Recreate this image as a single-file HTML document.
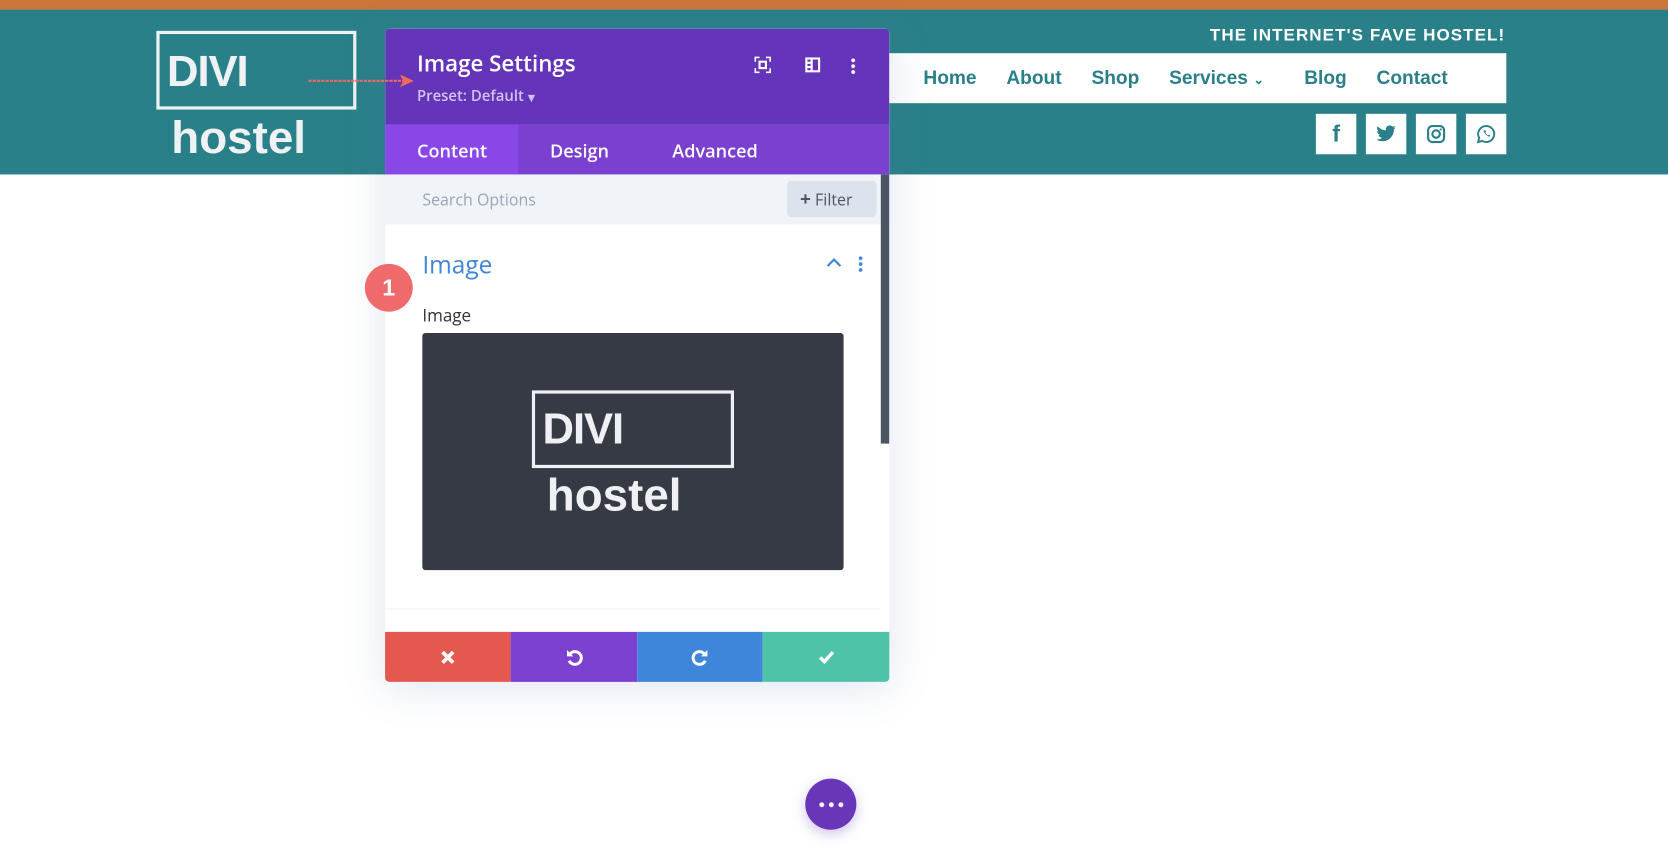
<!DOCTYPE html>
<html><head><meta charset="utf-8"><style>
*{margin:0;padding:0;box-sizing:border-box}
body{width:1668px;height:855px;overflow:hidden;background:#fff;font-family:"Liberation Sans",sans-serif;position:relative}
#w{position:absolute;left:0;top:0;width:1568px;height:804px;transform:scale(1.06378);transform-origin:0 0}
.a{position:absolute}
.os{font-family:"Open Sans","DejaVu Sans","Liberation Sans",sans-serif}
.nav span{position:absolute;top:13px;color:#2a7f88;font-weight:bold;font-size:18px}
.soc{position:absolute;top:107px;width:38px;height:38px;background:#fff;display:flex;align-items:center;justify-content:center}
.btn{position:absolute;top:594px;height:47px;display:flex;align-items:center;justify-content:center}
</style></head><body><div id="w">
<div class="a" style="left:0;top:0;width:1568px;height:9px;background:#cc763a"></div>
<div class="a" style="left:0;top:9px;width:1568px;height:155px;background:#2a8088"></div>
<!-- logo -->
<div class="a" style="left:147px;top:29px;width:188px;height:74px;border:3px solid #eef2f5"></div>
<div class="a" style="left:157px;top:44px;font-size:41px;font-weight:bold;color:#eef2f5;letter-spacing:-1px">DIVI</div>
<div class="a" style="left:161px;top:106px;font-size:43px;font-weight:bold;color:#eef2f5">hostel</div>
<!-- tagline -->
<div class="a" style="right:153px;top:25px;color:#fff;font-weight:bold;font-size:16px;letter-spacing:1px">THE INTERNET'S FAVE HOSTEL!</div>
<!-- nav -->
<div class="a nav" style="left:835px;top:50px;width:581px;height:47px;background:#fff">
<span style="left:33px">Home</span><span style="left:111px">About</span><span style="left:191px">Shop</span><span style="left:264px">Services <small style="font-size:12px">&#8964;</small></span><span style="left:391px">Blog</span><span style="left:459px">Contact</span>
</div>
<div class="soc" style="left:1237px"><span style="color:#2a7f88;font-weight:bold;font-size:22px">f</span></div>
<div class="soc" style="left:1284px"><svg width="20" height="18" viewBox="0 0 24 20"><path d="M23 2.5c-.8.4-1.7.6-2.6.7.9-.6 1.6-1.4 2-2.5-.9.5-1.9.9-2.9 1.1C18.6.9 17.4.3 16.1.3c-2.5 0-4.5 2-4.5 4.5 0 .4 0 .7.1 1C7.9 5.6 4.6 3.8 2.4 1.1c-.4.7-.6 1.5-.6 2.3 0 1.6.8 2.9 2 3.8-.7 0-1.4-.2-2-.6 0 2.2 1.6 4 3.6 4.4-.7.2-1.4.2-2 .1.6 1.8 2.200 3.1 4.2 3.1-1.5 1.2-3.5 1.9-5.6 1.900H1c2 1.3 4.4 2 6.9 2 8.3 0 12.8-6.9 12.8-12.8v-.6c.9-.6 1.7-1.4 2.3-2.3z" fill="#2a7f88"/></svg></div>
<div class="soc" style="left:1331px"><svg width="18" height="18" viewBox="0 0 18 18"><rect x="1.5" y="1.5" width="15" height="15" rx="4" fill="none" stroke="#2a7f88" stroke-width="2"/><circle cx="9" cy="9" r="3.5" fill="none" stroke="#2a7f88" stroke-width="2"/><circle cx="13.3" cy="4.7" r="1" fill="#2a7f88"/></svg></div>
<div class="soc" style="left:1378px"><svg width="18" height="18" viewBox="0 0 18 18"><path d="M9 1.5a7.5 7.5 0 0 0-6.5 11.2L1.5 16.5l3.9-1A7.5 7.5 0 1 0 9 1.5z" fill="none" stroke="#2a7f88" stroke-width="1.8"/><path d="M6.5 5.5c.5 2.5 2.5 5 5.5 6l1-1.2-1.5-.8-.7.7c-1-.5-2-1.5-2.5-2.5l.7-.7-.8-1.5z" fill="#2a7f88"/></svg></div>
<!-- panel -->
<div class="a" style="left:362px;top:27px;width:474px;height:614px;border-radius:4px;overflow:hidden;box-shadow:0 5px 40px rgba(80,110,180,.18);background:#fff">
<div class="a" style="left:0;top:0;width:474px;height:90px;background:#6535b9"></div>
<div class="a os" style="left:30px;top:19px;color:#fff;font-size:21px;font-weight:600">Image Settings</div>
<div class="a os" style="left:30px;top:54px;color:#d2c2ef;font-size:14px;font-weight:600">Preset: Default <span style="font-size:9px">▼</span></div>
<svg class="a" style="left:347px;top:26px" width="16" height="16"><path d="M1 5V1h4M11 1h4v4M15 11v4h-4M5 15H1v-4" fill="none" stroke="#fff" stroke-width="1.5"/><rect x="5" y="5" width="6" height="6" fill="none" stroke="#fff" stroke-width="2"/></svg>
<svg class="a" style="left:394px;top:26px" width="16" height="16"><rect x="1" y="1" width="14" height="14" fill="#fff"/><rect x="3" y="3" width="3" height="2" fill="#6535b9"/><rect x="3" y="7" width="3" height="2" fill="#6535b9"/><rect x="3" y="11" width="3" height="2" fill="#6535b9"/><rect x="8" y="3" width="5" height="10" fill="#6535b9"/></svg>
<div class="a" style="left:438px;top:27px;width:4px;height:16px;background:radial-gradient(circle,#fff 1.6px,transparent 2px) 0 0/4px 5.5px"></div>
<div class="a" style="left:0;top:90px;width:474px;height:47px;background:#7b40d0"></div>
<div class="a" style="left:0;top:90px;width:125px;height:47px;background:#8a47e8"></div>
<div class="a os" style="left:30px;top:103px;color:#fff;font-size:17px;font-weight:600">Content</div>
<div class="a os" style="left:155px;top:103px;color:#fff;font-size:17px;font-weight:600">Design</div>
<div class="a os" style="left:270px;top:103px;color:#fff;font-size:17px;font-weight:600">Advanced</div>
<div class="a" style="left:0;top:137px;width:474px;height:47px;background:#f0f3f8"></div>
<div class="a os" style="left:35px;top:151px;color:#9aa5b5;font-size:15px">Search Options</div>
<div class="a os" style="left:378px;top:143px;width:84px;height:34px;background:#dde3ec;border-radius:4px;color:#4d5766;font-size:15px;line-height:34px;padding-left:12px"><b style="font-size:18px">+</b> Filter</div>
<div class="a" style="left:466px;top:137px;width:8px;height:253px;background:#4b5563"></div>
<div class="a os" style="left:35px;top:205px;color:#3e86d8;font-size:23px">Image</div>
<svg class="a" style="left:414px;top:214px" width="16" height="12"><path d="M2 9l6-6 6 6" fill="none" stroke="#3e86d8" stroke-width="2"/></svg>
<div class="a" style="left:445px;top:213px;width:4px;height:16px;background:radial-gradient(circle,#3e86d8 1.5px,transparent 2px) 0 0/4px 5.5px"></div>
<div class="a os" style="left:35px;top:258px;color:#333;font-size:16px">Image</div>
<div class="a" style="left:35px;top:286px;width:396px;height:223px;background:#353a45;border-radius:3px"></div>
<div class="a" style="left:138px;top:340px;width:190px;height:73px;border:3px solid #eef0f3"></div>
<div class="a" style="left:148px;top:353px;font-size:41px;font-weight:bold;color:#eef0f3;letter-spacing:-1px">DIVI</div>
<div class="a" style="left:152px;top:415px;font-size:43px;font-weight:bold;color:#eef0f3">hostel</div>
<div class="a" style="left:0;top:545px;width:466px;height:1px;background:#eef1f6"></div>
</div>
<svg class="a" style="left:288px;top:68px" width="104" height="16"><line x1="2" y1="8" x2="92" y2="8" stroke="#ef6a5e" stroke-width="2" stroke-dasharray="3 1"/><path d="M88 2 L101 8 L88 14 L91 8Z" fill="#ef6a5e"/></svg>
<div class="btn" style="left:362px;width:118px;background:#e5584f;border-bottom-left-radius:4px"><svg width="14" height="14"><path d="M2 2l10 10M12 2L2 12" stroke="#fff" stroke-width="3.5"/></svg></div>
<div class="btn" style="left:480px;width:119px;background:#7c41d0"><svg width="18" height="18" viewBox="0 0 18 18"><path d="M5 5.5A6 6 0 1 1 4 12" fill="none" stroke="#fff" stroke-width="2.8"/><path d="M2 2v6h6z" fill="#fff"/></svg></div>
<div class="btn" style="left:599px;width:118px;background:#3d86da"><svg width="18" height="18" viewBox="0 0 18 18"><path d="M13 5.5A6 6 0 1 0 14 12" fill="none" stroke="#fff" stroke-width="2.8"/><path d="M16 2v6h-6z" fill="#fff"/></svg></div>
<div class="btn" style="left:717px;width:119px;background:#4fc3a8;border-bottom-right-radius:4px"><svg width="16" height="14"><path d="M2 7l4 4 8-9" fill="none" stroke="#fff" stroke-width="3.2"/></svg></div>
<!-- badge -->
<div class="a" style="left:343px;top:248px;width:45px;height:45px;border-radius:50%;background:#ef6a6a;color:#fff;font-weight:bold;font-size:22px;text-align:center;line-height:45px">1</div>
<!-- fab -->
<div class="a" style="left:757px;top:732px;width:48px;height:48px;border-radius:50%;background:#6a36b9;box-shadow:0 4px 12px rgba(100,60,180,.3)"></div>
<div class="a" style="left:768px;top:754px;width:27px;height:5px;background:radial-gradient(circle,#fff 2px,transparent 2.5px) 0 0/9px 5px"></div>
</div></body></html>
